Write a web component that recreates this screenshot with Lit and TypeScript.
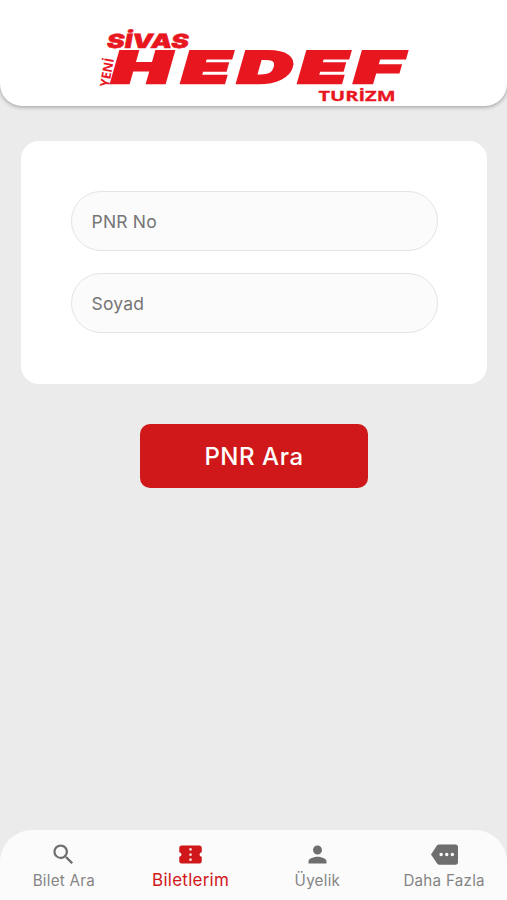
import { LitElement, html, css, svg } from "lit";
import { customElement, property } from "lit/decorators.js";

const icons = {
  search: svg`<path d="M15.5 14h-.79l-.28-.27A6.471 6.471 0 0 0 16 9.500 6.500 6.500 0 1 0 9.500 16c1.610 0 3.090-.590 4.230-1.570l.27.280v.790l5 4.990L20.490 19l-4.990-5zm-6 0C7.010 14 5 11.990 5 9.500S7.010 5 9.500 5 14 7.010 14 9.500 11.990 14 9.500 14z"/>`,
  ticket: svg`<path d="M20 12c0-1.100.900-2 2-2V6c0-1.100-.900-2-2-2H4c-1.100 0-1.990.900-1.990 2v4c1.100 0 1.990.900 1.990 2s-.890 2-2 2v4c0 1.100.900 2 2 2h16c1.100 0 2-.900 2-2v-4c-1.100 0-2-.900-2-2zm-7 5.500h-2v-2h2v2zm0-4.500h-2v-2h2v2zm0-4.500h-2v-2h2v2z"/>`,
  person: svg`<path d="M12 12c2.210 0 4-1.790 4-4s-1.790-4-4-4-4 1.790-4 4 1.790 4 4 4zm0 2c-2.670 0-8 1.340-8 4v2h16v-2c0-2.660-5.330-4-8-4z"/>`,
  more: svg`<path d="M22 3H7c-.69 0-1.230.350-1.590.880L0 12l5.410 8.110c.36.530.97.890 1.660.890H22c1.100 0 2-.900 2-2V5c0-1.100-.900-2-2-2zM9 13.500c-.83 0-1.500-.670-1.500-1.500s.67-1.500 1.500-1.500 1.500.670 1.500 1.500-.67 1.500-1.500 1.500zm5 0c-.83 0-1.500-.670-1.500-1.500s.67-1.500 1.500-1.500 1.500.670 1.500 1.500-.67 1.500-1.500 1.500zm5 0c-.83 0-1.500-.670-1.500-1.500s.67-1.500 1.500-1.500 1.500.670 1.500 1.500-.67 1.500-1.500 1.500z"/>`,
};

@customElement("brand-logo")
export class BrandLogo extends LitElement {
  static styles = css`
    :host { display: block; width: 310px; height: 74px; }
    svg { display: block; overflow: visible; fill: #e8171f; }
    .name { font: 900 43.500px Inter, "Liberation Sans", sans-serif; stroke: #e8171f; stroke-width: 2.500px; stroke-linejoin: miter; }
    .city { font: 900 19.500px Inter, "Liberation Sans", sans-serif; stroke: #e8171f; stroke-width: 0.500px; }
    .side { font: 700 13px "Open Sans", sans-serif; }
    .sub { font: 700 14px "Open Sans", sans-serif; stroke: #e8171f; stroke-width: 0.300px; }
  `;
  render() {
    const letters: [string, number, number][] = [
      ["H", 9.5, 38], ["E", 79.5, 31], ["D", 135.5, 35], ["E", 196.5, 31], ["F", 252, 31],
    ];
    return html`<svg width="310" height="74" viewBox="0 0 310 74">
      <text class="city" textLength="82" lengthAdjust="spacingAndGlyphs" transform="translate(7 19) skewX(-10)">SİVAS</text>
      <text class="side" textLength="29" lengthAdjust="spacingAndGlyphs" transform="translate(10 58.500) rotate(-80)">YENİ</text>
      ${letters.map(([c, x, w]) => svg`<text class="name" textLength=${w} lengthAdjust="spacingAndGlyphs" transform="translate(${x} 54.200) skewX(-16) scale(1.55 1)">${c}</text>`)}
      <text class="sub" x="219.500" y="72" textLength="77" lengthAdjust="spacingAndGlyphs">TURİZM</text>
    </svg>`;
  }
}

@customElement("tab-item")
export class TabItem extends LitElement {
  @property() icon: keyof typeof icons = "search";
  @property() label = "";
  @property({ type: Boolean, reflect: true }) active = false;
  static styles = css`
    :host { flex: 1; display: flex; flex-direction: column; align-items: center; padding: 11px 0 0 1px; color: #858585; font-size: 15.200px; letter-spacing: 0.250px; }
    svg { display: block; width: 27px; height: 27px; fill: #6e6e6e; }
    span { line-height: 20px; margin-top: 3px; white-space: nowrap; }
    :host([active]) { color: #d01719; font-size: 17px; letter-spacing: 0.250px; }
    :host([active]) svg { fill: #d01719; }
    :host([active]) span { margin-top: 2px; }
  `;
  render() {
    return html`<svg viewBox="0 0 24 24">${icons[this.icon]}</svg><span>${this.label}</span>`;
  }
}

@customElement("app-root")
export class AppRoot extends LitElement {
  static styles = css`
    :host { display: flex; flex-direction: column; height: 900px; box-sizing: border-box; background: #ebebeb; font-family: Inter, "Liberation Sans", sans-serif; overflow: hidden; }
    header { height: 106px; box-sizing: border-box; padding: 29px 0 0 99px; background: #fff; border-radius: 0 0 22px 22px; box-shadow: 0 1px 4px rgba(0, 0, 0, 0.350); }
    main { flex: 1; display: flex; flex-direction: column; align-items: center; padding-top: 35px; }
    .card { width: 466px; height: 243px; box-sizing: border-box; padding: 50px 50px; display: flex; flex-direction: column; gap: 22px; background: #fff; border-radius: 18px; }
    input { width: 367px; height: 60px; box-sizing: border-box; margin: 0; padding: 0 20px; border: 1px solid #e4e4e4; border-radius: 30px; background: #fbfbfb; font: 400 17.500px Inter, sans-serif; letter-spacing: 0.200px; outline: none; }
    input::placeholder { color: #757575; opacity: 1; }
    button { width: 228px; height: 64px; margin: 40px 0 0; padding: 0 0 0 1px; border: 0; border-radius: 10px; background: #d01719; color: #fff; font: 500 24px Inter, sans-serif; letter-spacing: 0.550px; }
    nav { display: flex; height: 70px; background: #fbfbfb; border-radius: 32px 32px 0 0; }
  `;
  render() {
    return html`
      <header><brand-logo></brand-logo></header>
      <main>
        <section class="card">
          <input placeholder="PNR No" />
          <input placeholder="Soyad" />
        </section>
        <button>PNR Ara</button>
      </main>
      <nav>
        <tab-item icon="search" label="Bilet Ara"></tab-item>
        <tab-item icon="ticket" label="Biletlerim" active></tab-item>
        <tab-item icon="person" label="Üyelik"></tab-item>
        <tab-item icon="more" label="Daha Fazla"></tab-item>
      </nav>`;
  }
}
